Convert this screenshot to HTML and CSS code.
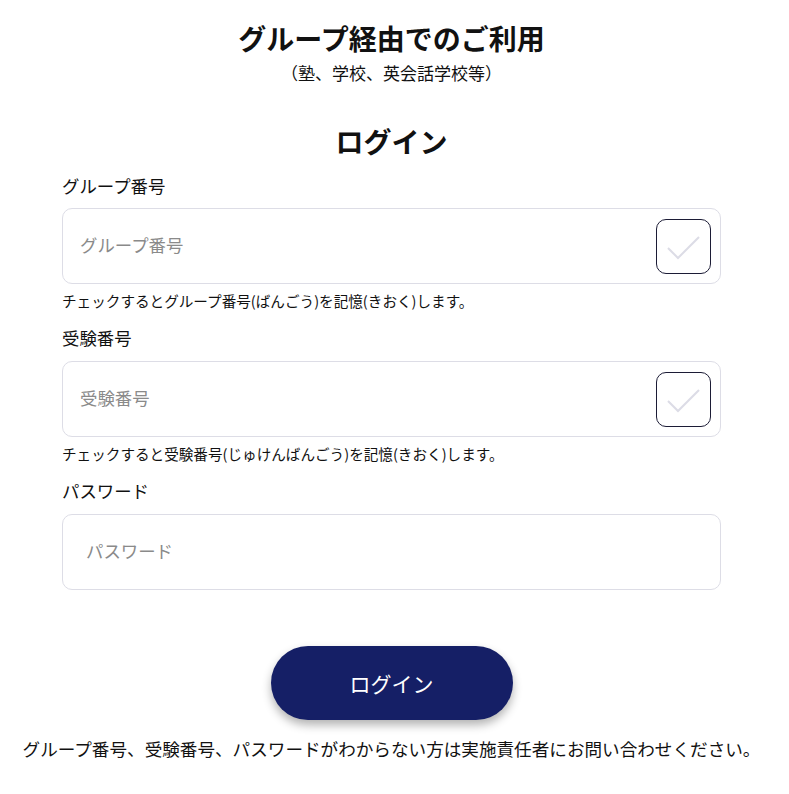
FILE: index.html
```html
<!DOCTYPE html>
<html lang="ja">

<head>
  <meta charset="UTF-8"/>
  <meta name="viewport" content="width=device-width, initial-scale=1.0"/>
  <title>ログイン</title>
  <link rel="stylesheet" href="styles.css">
</head>

<body>
<main class="page">
  <h1 class="title">グループ経由でのご利用</h1>
  <p class="subtitle">（塾、学校、英会話学校等）</p>
  <h2 class="login-heading">ログイン</h2>

  <form class="login-form">
    <label class="field-label" for="groupNo">グループ番号</label>
    <div class="field">
      <input id="groupNo" type="text" placeholder="グループ番号"/>
      <span class="remember">
        <svg width="55" height="55" viewBox="0 0 55 55"><polyline points="12,29 22,39 43,18" fill="none" stroke="#dcdce6" stroke-width="2"/></svg>
      </span>
    </div>
    <p class="hint">チェックするとグループ番号(ばんごう)を記憶(きおく)します。</p>

    <label class="field-label" for="examNo">受験番号</label>
    <div class="field">
      <input id="examNo" type="text" placeholder="受験番号"/>
      <span class="remember">
        <svg width="55" height="55" viewBox="0 0 55 55"><polyline points="12,29 22,39 43,18" fill="none" stroke="#dcdce6" stroke-width="2"/></svg>
      </span>
    </div>
    <p class="hint">チェックすると受験番号(じゅけんばんごう)を記憶(きおく)します。</p>

    <label class="field-label" for="password">パスワード</label>
    <div class="field">
      <input id="password" class="password" type="password" placeholder="パスワード"/>
    </div>

    <button type="button" class="btn-login">ログイン</button>
  </form>

  <p class="note">グループ番号、受験番号、パスワードがわからない方は実施責任者にお問い合わせください。</p>
</main>
</body>

</html>
```

FILE: styles.css
```css
body {
  margin: 0;
  background: #fff;
  color: #111;
  font-family: "Noto Sans CJK JP", "Noto Sans", sans-serif;
}

.page {
  width: 783px;
  padding-top: 20px;
  display: flex;
  flex-direction: column;
  align-items: center;
}

.title {
  margin: 0;
  font-size: 28px;
  line-height: 36px;
  font-weight: 700;
}

.subtitle {
  margin: 5px 0 0;
  font-size: 17px;
  line-height: 24px;
}

.login-heading {
  margin: 38px 0 0;
  font-size: 28px;
  line-height: 36px;
  font-weight: 700;
}

.login-form {
  width: 659px;
  margin-top: 15px;
  display: flex;
  flex-direction: column;
}

.field-label {
  font-size: 17.4px;
  line-height: 24px;
  margin-bottom: 10px;
}

.field {
  height: 76px;
  border: 1px solid #dddde6;
  border-radius: 10px;
  box-sizing: border-box;
  display: flex;
  align-items: center;
  padding: 0 9px 0 17px;
}

.field input {
  flex: 1;
  border: none;
  outline: none;
  font-family: inherit;
  font-size: 17.4px;
  color: #333;
  background: transparent;
  padding: 0 0 4px;
}

.field input::placeholder {
  color: #8a8a8a;
}

.field input.password {
  padding-left: 6px;
}

.remember {
  width: 55px;
  height: 55px;
  box-sizing: border-box;
  border: 1px solid #1c1c36;
  border-radius: 10px;
  display: flex;
  align-items: center;
  justify-content: center;
}

.remember svg {
  display: block;
  flex: none;
}

.hint {
  margin: 7px 0 15px;
  font-size: 14.6px;
  line-height: 20px;
}

.hint + .field-label {
  margin-bottom: 11px;
}

.btn-login {
  align-self: center;
  margin-top: 56px;
  width: 242px;
  height: 74px;
  border: none;
  border-radius: 37px;
  background: #151f66;
  color: #fff;
  font-family: inherit;
  font-size: 21px;
  box-shadow: 0 5px 10px rgba(0, 0, 0, 0.3);
  cursor: pointer;
}

.note {
  margin: 17px 0 0;
  font-size: 17.6px;
  line-height: 24px;
  white-space: nowrap;
}
```
